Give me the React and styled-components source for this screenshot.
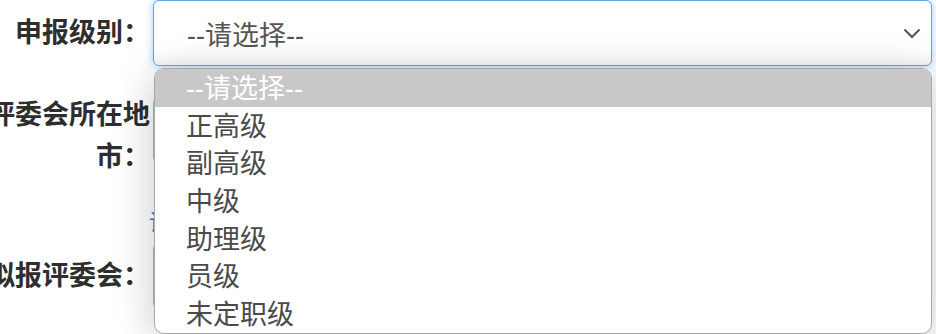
import React from 'react';
import styled, { createGlobalStyle } from 'styled-components';

const GlobalStyle = createGlobalStyle`
  html, body {
    margin: 0;
    padding: 0;
    background: #fff;
    overflow: hidden;
  }
  body {
    font-family: "Liberation Sans", "Noto Sans CJK SC", sans-serif;
    color: #333;
  }
`;

const Page = styled.div`
  width: 936px;
  height: 334px;
  padding-right: 4px;
  box-sizing: border-box;
`;

const Form = styled.form`
  margin-left: -20px;
  display: grid;
  grid-template-columns: 170px 1fr;
  column-gap: 3px;
`;

const Label = styled.label`
  display: flex;
  align-items: center;
  justify-content: flex-end;
  text-align: right;
  margin-top: ${(p) => p.$top || 0}px;
  min-height: ${(p) => p.$height || 66}px;
  font-size: 27px;
  line-height: 42px;
  font-weight: bold;
  color: #2e2e2e;
`;

const Field = styled.div`
  position: relative;
  margin-top: ${(p) => p.$top || 0}px;
`;

const SelectBox = styled.div`
  height: 66px;
  box-sizing: border-box;
  display: flex;
  align-items: center;
  justify-content: space-between;
  padding: 0 10px 0 33px;
  background: #fff;
  border: 1px solid ${(p) => (p.$focus ? '#5ea6e6' : '#b5b5b5')};
  border-radius: 6px;
  box-shadow: ${(p) =>
    p.$focus
      ? 'inset 0 -6px 8px rgba(0,0,0,.03), 0 0 8px rgba(102,175,233,.6)'
      : 'inset 0 1px 1px rgba(0,0,0,.075)'};
  font-size: 27px;
  color: #555;
`;

const Help = styled.div`
  grid-column: 2;
  margin: 30px 0 0 -4px;
  height: 35px;
  font-size: 22px;
  line-height: 30px;
  color: #337ab7;
`;

const Dropdown = styled.ul`
  position: absolute;
  top: 68px;
  left: 1px;
  right: 0;
  margin: 0;
  padding: 0;
  list-style: none;
  background: #fff;
  border: 1px solid #a9a9a9;
  border-radius: 10px;
  overflow: hidden;
  box-shadow: 0 6px 40px rgba(0, 0, 0, 0.22);
  z-index: 10;
`;

const Option = styled.li`
  box-sizing: border-box;
  height: 37.7px;
  padding: 4px 0 0 31px;
  line-height: 33.7px;
  font-size: 27px;
  color: ${(p) => (p.$active ? '#fff' : '#4a4a4a')};
  background: ${(p) => (p.$active ? '#c8c8c8' : 'transparent')};
  white-space: nowrap;
`;

const Chevron = () => (
  <svg width="18" height="11" viewBox="0 0 18 11" fill="none">
    <polyline points="1.5,1.5 9,9 16.5,1.5" stroke="#555" strokeWidth="2" />
  </svg>
);

const levels = ['--请选择--', '正高级', '副高级', '中级', '助理级', '员级', '未定职级'];

export default function App() {
  return (
    <Page>
      <GlobalStyle />
      <Form>
        <Label>申报级别：</Label>
        <Field>
          <SelectBox $focus>
            <span>--请选择--</span>
            <Chevron />
          </SelectBox>
          <Dropdown>
            {levels.map((l, i) => (
              <Option key={l} $active={i === 0}>{l}</Option>
            ))}
          </Dropdown>
        </Field>

        <Label $top={28} $height={84}>评委会所在地市：</Label>
        <Field $top={31}>
          <SelectBox>
            <span>--请选择--</span>
            <Chevron />
          </SelectBox>
        </Field>

        <Help>请先选择评委会所在地市</Help>

        <Label>拟报评委会：</Label>
        <Field>
          <SelectBox>
            <span>--请选择--</span>
            <Chevron />
          </SelectBox>
        </Field>
      </Form>
    </Page>
  );
}
